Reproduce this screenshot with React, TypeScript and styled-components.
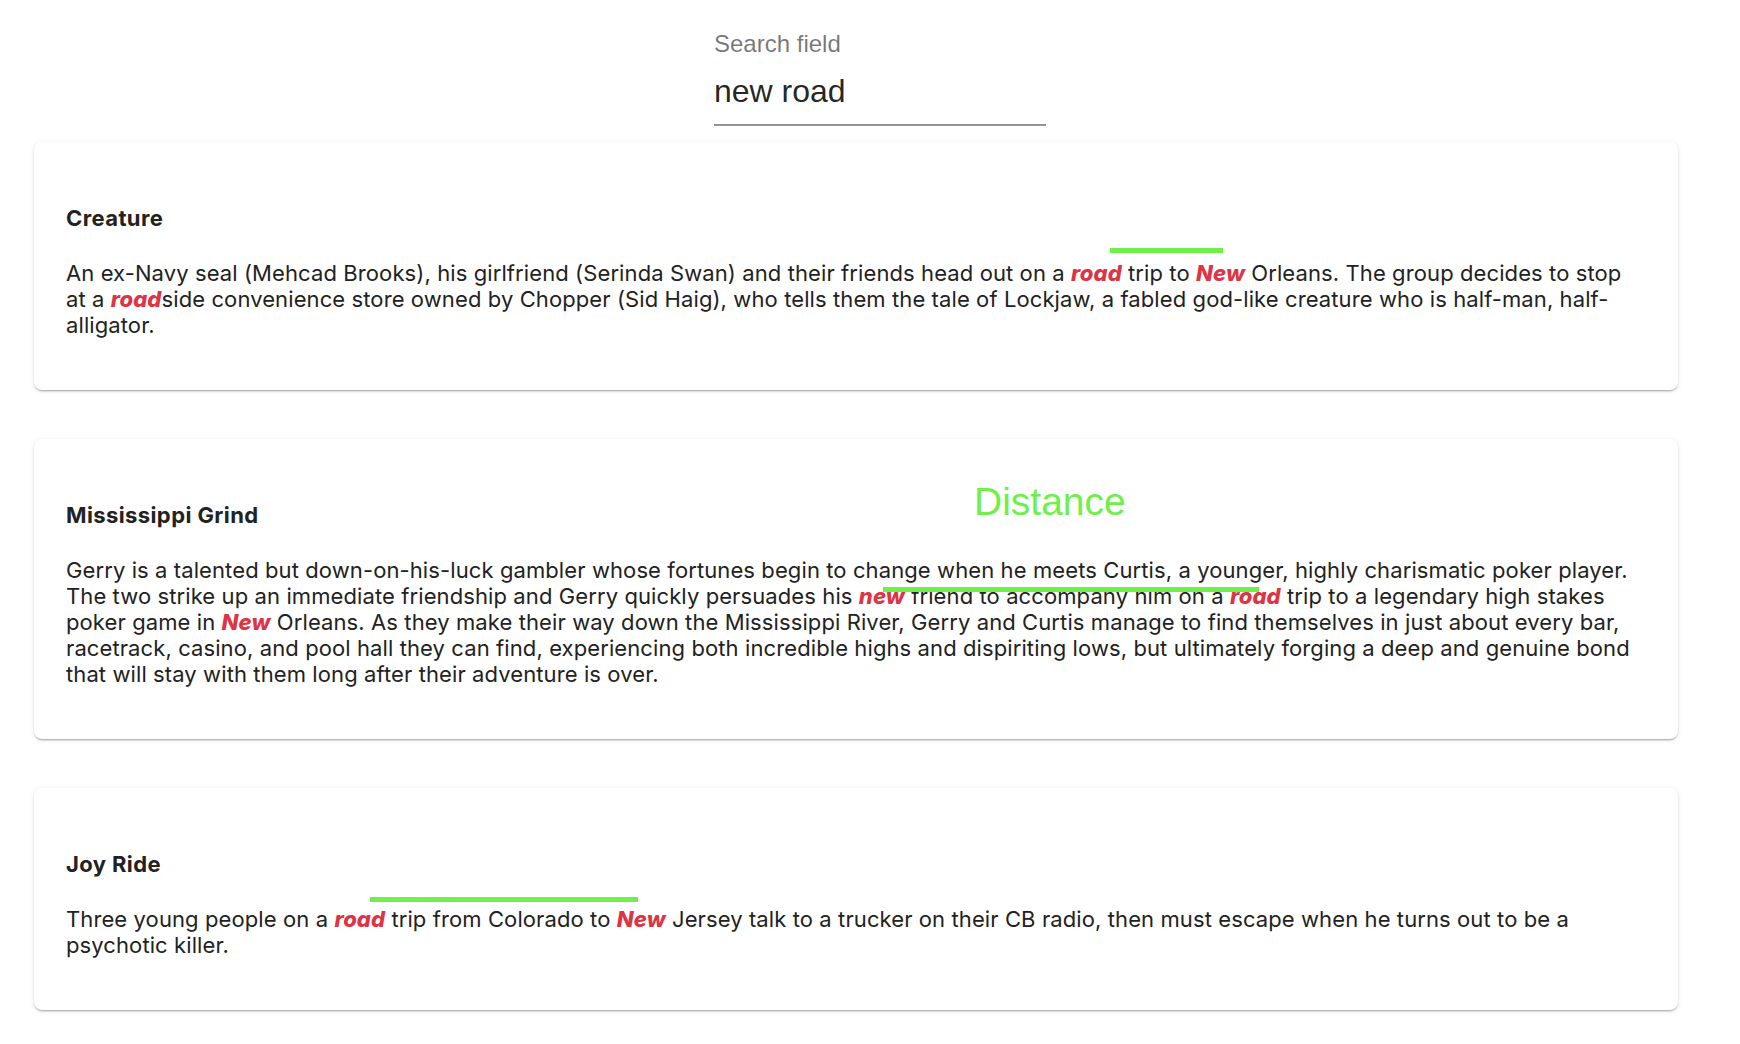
import React from 'react';
import styled, { createGlobalStyle } from 'styled-components';

interface Overlay {
  left: number;
  top: number;
  width: number;
}

interface Movie {
  id: number;
  title: string;
  plot: string;
  bar: Overlay;
  label?: { left: number; top: number; text: string };
}

const movies: Movie[] = [
  {
    id: 1,
    title: 'Creature',
    plot:
      'An ex-Navy seal (Mehcad Brooks), his girlfriend (Serinda Swan) and their friends head out on a road trip to New Orleans. The group decides to stop at a roadside convenience store owned by Chopper (Sid Haig), who tells them the tale of Lockjaw, a fabled god-like creature who is half-man, half-alligator.',
    bar: { left: 1076, top: 106, width: 113 },
  },
  {
    id: 2,
    title: 'Mississippi Grind',
    plot:
      'Gerry is a talented but down-on-his-luck gambler whose fortunes begin to change when he meets Curtis, a younger, highly charismatic poker player. The two strike up an immediate friendship and Gerry quickly persuades his new friend to accompany him on a road trip to a legendary high stakes poker game in New Orleans. As they make their way down the Mississippi River, Gerry and Curtis manage to find themselves in just about every bar, racetrack, casino, and pool hall they can find, experiencing both incredible highs and dispiriting lows, but ultimately forging a deep and genuine bond that will stay with them long after their adventure is over.',
    bar: { left: 849, top: 148, width: 376 },
    label: { left: 940, top: 43, text: 'Distance' },
  },
  {
    id: 3,
    title: 'Joy Ride',
    plot:
      'Three young people on a road trip from Colorado to New Jersey talk to a trucker on their CB radio, then must escape when he turns out to be a psychotic killer.',
    bar: { left: 336, top: 109, width: 268 },
  },
];

const query = 'new road';

const GlobalStyle = createGlobalStyle`
  html, body {
    margin: 0;
    padding: 0;
    background: #ffffff;
  }
  * {
    box-sizing: border-box;
  }
`;

const Page = styled.div`
  padding: 32px 62px 0 34px;
  font-family: Inter, 'Noto Sans', sans-serif;
`;

const SearchField = styled.div`
  display: flex;
  flex-direction: column;
  width: 332px;
  margin-left: 680px;
  margin-bottom: 16px;
  font-family: 'Liberation Sans', Arial, sans-serif;

  label {
    font-size: 24px;
    line-height: 24px;
    color: rgba(0, 0, 0, 0.54);
    margin-bottom: 12px;
  }

  input {
    border: none;
    outline: none;
    background: transparent;
    font-family: inherit;
    font-size: 32px;
    line-height: 46px;
    height: 58px;
    padding: 0 0 10px;
    color: rgba(0, 0, 0, 0.87);
    border-bottom: 2px solid #949494;
  }
`;

const Card = styled.section`
  position: relative;
  background: #ffffff;
  border-radius: 8px;
  padding: 63px 32px 52px;
  margin-bottom: 49px;
  box-shadow: 0 2px 2px -1px rgba(0, 0, 0, 0.25), 0 1px 2px rgba(0, 0, 0, 0.1),
    0 1px 6px rgba(0, 0, 0, 0.08);
  color: #222222;

  &:last-child {
    margin-bottom: 20px;
  }
`;

const Title = styled.h2`
  margin: 0 0 29px;
  font-size: 22px;
  line-height: 26px;
  font-weight: 700;
  letter-spacing: 0.4px;
`;

const Plot = styled.p`
  margin: 0;
  font-size: 22px;
  line-height: 26px;
  letter-spacing: 0.1px;
`;

const Mark = styled.em`
  color: #dc3545;
  font-weight: 800;
  font-style: italic;
`;

const DistanceBar = styled.div`
  position: absolute;
  height: 5px;
  background: #6fef4a;
`;

const DistanceLabel = styled.span`
  position: absolute;
  font-family: 'Liberation Sans', Arial, sans-serif;
  font-size: 39px;
  line-height: 1;
  color: #6fef4a;
`;

const highlight = (text: string) => {
  const words = query.split(' ').filter(Boolean);
  const re = new RegExp(`(${words.join('|')})`, 'gi');
  return text.split(re).map((part, i) =>
    words.includes(part.toLowerCase()) ? (
      <Mark key={`mark-${i}`}>{part}</Mark>
    ) : (
      <React.Fragment key={`txt-${i}`}>{part}</React.Fragment>
    ),
  );
};

const MovieCard: React.FC<{ movie: Movie }> = ({ movie }) => {
  return (
    <Card>
      <Title>{movie.title}</Title>
      <Plot>{highlight(movie.plot)}</Plot>
      {movie.label && (
        <DistanceLabel style={{ left: movie.label.left, top: movie.label.top }}>
          {movie.label.text}
        </DistanceLabel>
      )}
      <DistanceBar
        style={{ left: movie.bar.left, top: movie.bar.top, width: movie.bar.width }}
      />
    </Card>
  );
};

const App: React.FC = () => {
  return (
    <>
      <GlobalStyle />
      <Page>
        <SearchField>
          <label htmlFor="search">Search field</label>
          <input id="search" defaultValue={query} />
        </SearchField>
        {movies.map((movie: Movie) => (
          <MovieCard movie={movie} key={`movie-${movie.id}`} />
        ))}
      </Page>
    </>
  );
};

export default App;
